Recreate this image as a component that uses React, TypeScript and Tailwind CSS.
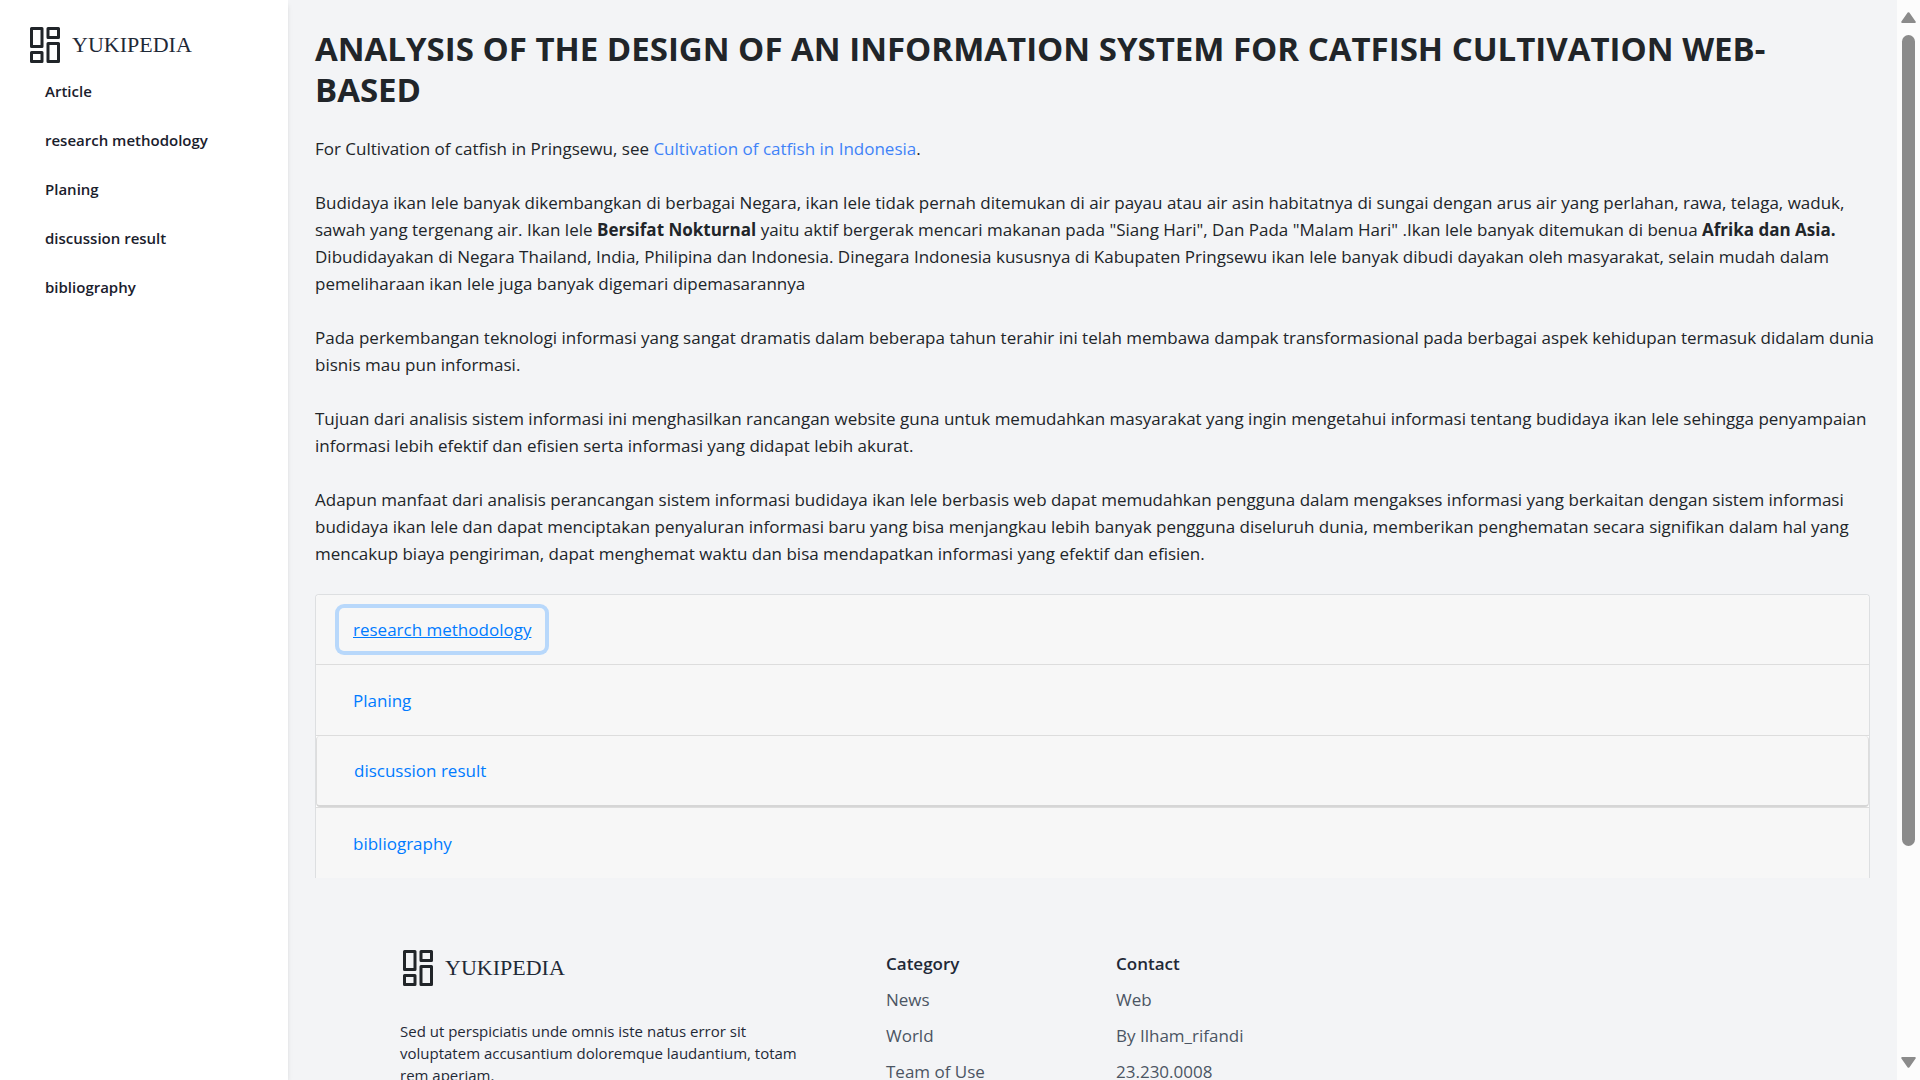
import React from "react";

const sidebarLinks = ["Article", "research methodology", "Planing", "discussion result", "bibliography"];

const footerColumns = [
  { title: "Category", items: ["News", "World", "Team of Use"] },
  { title: "Contact", items: ["Web", "By Ilham_rifandi", "23.230.0008"] },
];

function Logo() {
  return (
    <a href="#home" className="flex items-center gap-[11px] text-[#212529]">
      <svg width="32" height="36" viewBox="0 0 32 36" fill="none" stroke="currentColor" strokeWidth="3" strokeLinejoin="round" aria-hidden="true">
        <rect x="2.5" y="1.5" width="10.5" height="18" />
        <rect x="19" y="1.5" width="10.5" height="9" />
        <rect x="2.5" y="25.5" width="10.5" height="9" />
        <rect x="19" y="16.5" width="10.5" height="18" />
      </svg>
      <span className="font-['Liberation_Serif',serif] text-[22px] leading-9 text-[#1f2937]">YUKIPEDIA</span>
    </a>
  );
}

function AccordionLink({ label, focused = false }: { label: string; focused?: boolean }) {
  return (
    <button
      type="button"
      className={
        focused
          ? "h-[43px] rounded-[5px] px-[14px] text-[#007bff] underline ring-4 ring-[#b8d8fb]"
          : "h-[43px] rounded-[5px] px-[14px] text-[#007bff]"
      }
    >
      {label}
    </button>
  );
}

function Scrollbar() {
  return (
    <div className="flex w-[23px] shrink-0 flex-col items-center bg-[#fcfcfc] py-3" aria-hidden="true">
      <svg width="15" height="11" viewBox="0 0 15 11" fill="#8b8b8b" stroke="#8b8b8b" strokeWidth="2" strokeLinejoin="round">
        <path d="M7.5 1.2 L13.8 10 H1.2 Z" />
      </svg>
      <div className="mt-3 flex w-[13px] flex-1 flex-col">
        <div className="flex-[811] rounded-full bg-[#8b8b8b]" />
        <div className="flex-[211]" />
      </div>
      <svg width="15" height="11" viewBox="0 0 15 11" fill="#8b8b8b" stroke="#8b8b8b" strokeWidth="2" strokeLinejoin="round">
        <path d="M7.5 9.8 L13.8 1 H1.2 Z" />
      </svg>
    </div>
  );
}

export default function App() {
  return (
    <div className="flex h-screen overflow-hidden bg-[#f3f4f6] font-['Open_Sans',sans-serif] text-[17px] leading-[27px] text-[#212529]">
      <aside className="z-10 w-72 shrink-0 bg-white pt-[27px] shadow-md">
        <div className="pl-[29px]">
          <Logo />
        </div>
        <nav className="mt-1 flex flex-col pl-[45px] text-[15px] font-semibold leading-[21px] text-[#1a202c]">
          {sidebarLinks.map((label) => (
            <a key={label} href="#section" className="py-[14px]">
              {label}
            </a>
          ))}
        </nav>
      </aside>

      <div className="min-w-0 flex-1 overflow-hidden">
        <main className="px-[27px] pt-7">
          <h1 className="text-[33px] font-bold leading-[41px]">
            ANALYSIS OF THE DESIGN OF AN INFORMATION SYSTEM FOR CATFISH CULTIVATION WEB-
            <br />
            BASED
          </h1>
          <div className="-mr-5 mt-[25px] flex flex-col gap-[27px]">
            <p>
              For Cultivation of catfish in Pringsewu, see{" "}
              <a href="#indonesia" className="text-[#3f83f8]">
                Cultivation of catfish in Indonesia
              </a>
              .
            </p>
            <p>
              Budidaya ikan lele banyak dikembangkan di berbagai Negara, ikan lele tidak pernah ditemukan di air payau atau air asin habitatnya di sungai dengan arus air yang perlahan, rawa, telaga, waduk,
              <br />
              sawah yang tergenang air. Ikan lele <b>Bersifat Nokturnal</b> yaitu aktif bergerak mencari makanan pada "Siang Hari", Dan Pada "Malam Hari" .Ikan lele banyak ditemukan di benua <b>Afrika dan Asia.</b>
              <br />
              Dibudidayakan di Negara Thailand, India, Philipina dan Indonesia. Dinegara Indonesia kususnya di Kabupaten Pringsewu ikan lele banyak dibudi dayakan oleh masyarakat, selain mudah dalam
              <br />
              pemeliharaan ikan lele juga banyak digemari dipemasarannya
            </p>
            <p>
              Pada perkembangan teknologi informasi yang sangat dramatis dalam beberapa tahun terahir ini telah membawa dampak transformasional pada berbagai aspek kehidupan termasuk didalam dunia
              <br />
              bisnis mau pun informasi.
            </p>
            <p>
              Tujuan dari analisis sistem informasi ini menghasilkan rancangan website guna untuk memudahkan masyarakat yang ingin mengetahui informasi tentang budidaya ikan lele sehingga penyampaian
              <br />
              informasi lebih efektif dan efisien serta informasi yang didapat lebih akurat.
            </p>
            <p>
              Adapun manfaat dari analisis perancangan sistem informasi budidaya ikan lele berbasis web dapat memudahkan pengguna dalam mengakses informasi yang berkaitan dengan sistem informasi
              <br />
              budidaya ikan lele dan dapat menciptakan penyaluran informasi baru yang bisa menjangkau lebih banyak pengguna diseluruh dunia, memberikan penghematan secara signifikan dalam hal yang
              <br />
              mencakup biaya pengiriman, dapat menghemat waktu dan bisa mendapatkan informasi yang efektif dan efisien.
            </p>
          </div>

          <section className="mt-[27px] rounded-t-[4px] border border-b-0 border-[#dddfe1] bg-white">
            <div className="flex h-[70px] items-center rounded-t-[4px] border-b border-[#dddddd] bg-[#f7f7f7] px-[23px]">
              <AccordionLink label="research methodology" focused />
            </div>
            <div className="flex h-[71px] items-center border-b border-[#dddddd] bg-[#f7f7f7] px-[23px]">
              <AccordionLink label="Planing" />
            </div>
            <div className="flex h-[71px] items-center rounded-[4px] border-x border-b-2 border-x-[#dddddd] border-b-[#d6d6d6] bg-[#f7f7f7] px-[23px]">
              <AccordionLink label="discussion result" />
            </div>
            <div className="flex h-[71px] items-center border-t border-[#dddddd] bg-[#f7f7f7] px-[23px]">
              <AccordionLink label="bibliography" />
            </div>
          </section>
        </main>

        <footer className="flex px-28 pt-[72px]">
          <div className="w-[486px] shrink-0">
            <div className="pl-[2px]">
              <Logo />
            </div>
            <p className="mt-[34px] text-[15px] leading-[22px] text-[#1f2937]">
              Sed ut perspiciatis unde omnis iste natus error sit
              <br />
              voluptatem accusantium doloremque laudantium, totam
              <br />
              rem aperiam.
            </p>
          </div>
          {footerColumns.map((column) => (
            <div key={column.title} className="w-[230px] shrink-0">
              <h2 className="font-semibold text-[#1f2937]">{column.title}</h2>
              <ul className="mt-[9px] flex flex-col gap-[9px] text-[#4b5563]">
                {column.items.map((item) => (
                  <li key={item}>
                    <a href="#footer">{item}</a>
                  </li>
                ))}
              </ul>
            </div>
          ))}
        </footer>
      </div>

      <Scrollbar />
    </div>
  );
}
